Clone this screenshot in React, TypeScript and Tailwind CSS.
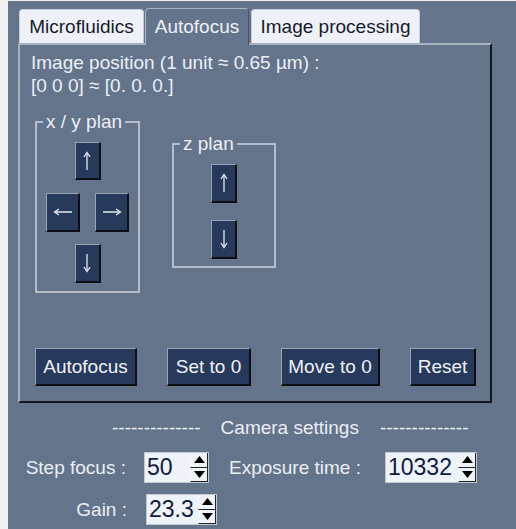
import type { ReactNode } from "react";

const FONT = "font-['Liberation_Sans',Arial,sans-serif]";

function ArrowBtn({ w, h, children }: { w: string; h: string; children: ReactNode }) {
  return (
    <div
      className={`${w} ${h} flex items-center justify-center bg-[#283a5c] border-t border-l border-t-[#9aa4b3] border-l-[#9aa4b3] border-r-2 border-b-2 border-r-[#0c1016] border-b-[#0c1016]`}
    >
      {children}
    </div>
  );
}

// thin arrow, drawn pointing up then rotated
function Arrow({ dir }: { dir: "up" | "down" | "left" | "right" }) {
  const rot = { up: 0, down: 180, left: 270, right: 90 }[dir];
  return (
    <svg width="20" height="20" viewBox="0 0 20 20" style={{ transform: `rotate(${rot}deg)` }}>
      <line x1="10" y1="2" x2="10" y2="19" stroke="#e4e9f0" strokeWidth="1.3" />
      <path d="M7 6 L10 1.5 L13 6" fill="none" stroke="#e4e9f0" strokeWidth="1.3" />
    </svg>
  );
}

function CmdBtn({ w, label }: { w: string; label: string }) {
  return (
    <div
      className={`${w} h-[38px] flex items-center justify-center bg-[#283a5c] border-t border-l border-t-[#9aa4b3] border-l-[#9aa4b3] border-r-2 border-b-2 border-r-[#0c1016] border-b-[#0c1016] text-[#eef2f8] text-[19px]`}
    >
      {label}
    </div>
  );
}

function Spin({ w, value }: { w: string; value: string }) {
  return (
    <div className={`${w} h-[31px] flex border border-[#c3c9d2] bg-[#eef2f9]`}>
      <span className="flex-1 pl-[2px] text-[23px] leading-[29px] text-[#101a3c] overflow-hidden">
        {value}
      </span>
      <div className="w-[18px] flex flex-col border-r border-r-[#222]">
        <div className="flex-1 flex items-center justify-center border-b border-b-[#222] border-l border-l-[#f8f9fb]">
          <svg width="11" height="7" viewBox="0 0 11 7">
            <polygon points="5.5,0 11,7 0,7" fill="#000" />
          </svg>
        </div>
        <div className="flex-1 flex items-center justify-center border-b border-b-[#222] border-l border-l-[#f8f9fb]">
          <svg width="11" height="7" viewBox="0 0 11 7">
            <polygon points="0,0 11,0 5.5,7" fill="#000" />
          </svg>
        </div>
      </div>
    </div>
  );
}

export default function App() {
  return (
    <div className={`w-[516px] h-[529px] bg-[#f0f0f0] overflow-hidden ${FONT}`}>
      <div className="ml-[8px] mt-[1px] h-[528px] bg-[#64748b] pl-[10px] pt-[7px] text-[19px] leading-[23px] text-[#eaeff6]">
        {/* tabs */}
        <div className="relative z-10 flex items-end gap-[1px] ml-[1px]">
          <div className="w-[125px] h-[34px] flex items-center justify-center rounded-t-[4px] bg-[#eef2f8] border border-b-0 border-[#c9ced6] text-[#151a2c]">
            Microfluidics
          </div>
          <div className="w-[104px] h-[37px] -mb-[2px] pb-[1px] flex items-center justify-center rounded-t-[4px] bg-[#64748b] border-t border-l border-r border-t-[#a9b3c0] border-l-[#a9b3c0] border-r-[#47536a] text-[#eef2f8]">
            Autofocus
          </div>
          <div className="w-[169px] h-[34px] ml-[1px] flex items-center justify-center rounded-t-[4px] bg-[#eef2f8] border border-b-0 border-[#c9ced6] text-[#151a2c]">
            Image processing
          </div>
        </div>

        {/* pane */}
        <div className="w-[474px] h-[360px] flex flex-col border-2 border-t-[#a7b1bf] border-l-[#a7b1bf] border-r-[#121820] border-b-[#121820]">
          <div className="pl-[11px] pt-[6px]">
            <div>Image position (1 unit ≈ 0.65 µm) :</div>
            <div>[0 0 0] ≈ [0. 0. 0.]</div>
          </div>

          <div className="flex items-start gap-[32px] pl-[15px] mt-[13px]">
            <fieldset className="w-[105px] border-2 border-[#b4bdc9] pb-[8px] flex flex-col items-center">
              <legend className="ml-[6px] px-[3px] leading-[23px]">x / y plan</legend>
              <div className="mt-[9px]">
                <ArrowBtn w="w-[26px]" h="h-[38px]"><Arrow dir="up" /></ArrowBtn>
              </div>
              <div className="mt-[13px] flex gap-[15px]">
                <ArrowBtn w="w-[34px]" h="h-[39px]"><Arrow dir="left" /></ArrowBtn>
                <ArrowBtn w="w-[34px]" h="h-[39px]"><Arrow dir="right" /></ArrowBtn>
              </div>
              <div className="mt-[12px]">
                <ArrowBtn w="w-[26px]" h="h-[39px]"><Arrow dir="down" /></ArrowBtn>
              </div>
            </fieldset>

            <fieldset className="mt-[22px] w-[104px] border-2 border-[#b4bdc9] pb-[7px] flex flex-col items-center">
              <legend className="ml-[6px] px-[3px] leading-[23px]">z plan</legend>
              <div className="mt-[9px]">
                <ArrowBtn w="w-[26px]" h="h-[39px]"><Arrow dir="up" /></ArrowBtn>
              </div>
              <div className="mt-[17px]">
                <ArrowBtn w="w-[26px]" h="h-[39px]"><Arrow dir="down" /></ArrowBtn>
              </div>
            </fieldset>
          </div>

          <div className="flex gap-[30px] pl-[15px] mt-[55px]">
            <CmdBtn w="w-[102px]" label="Autofocus" />
            <CmdBtn w="w-[84px]" label="Set to 0" />
            <CmdBtn w="w-[99px]" label="Move to 0" />
            <CmdBtn w="w-[66px]" label="Reset" />
          </div>
        </div>

        {/* camera settings */}
        <div className="mt-[13px] ml-[94px] flex">
          <span>--------------</span>
          <span className="ml-[20px]">Camera settings</span>
          <span className="ml-[21px]">--------------</span>
        </div>

        <div className="mt-[13px] flex items-center">
          <span className="w-[108px] text-right">Step focus :</span>
          <div className="ml-[18px]">
            <Spin w="w-[65px]" value="50" />
          </div>
          <span className="ml-[20px] w-[137px]">Exposure time :</span>
          <div className="ml-[19px]">
            <Spin w="w-[92px]" value="10332" />
          </div>
        </div>

        <div className="mt-[11px] flex items-center">
          <span className="w-[109px] text-right">Gain :</span>
          <div className="ml-[19px]">
            <Spin w="w-[71px]" value="23.3" />
          </div>
        </div>
      </div>
    </div>
  );
}
